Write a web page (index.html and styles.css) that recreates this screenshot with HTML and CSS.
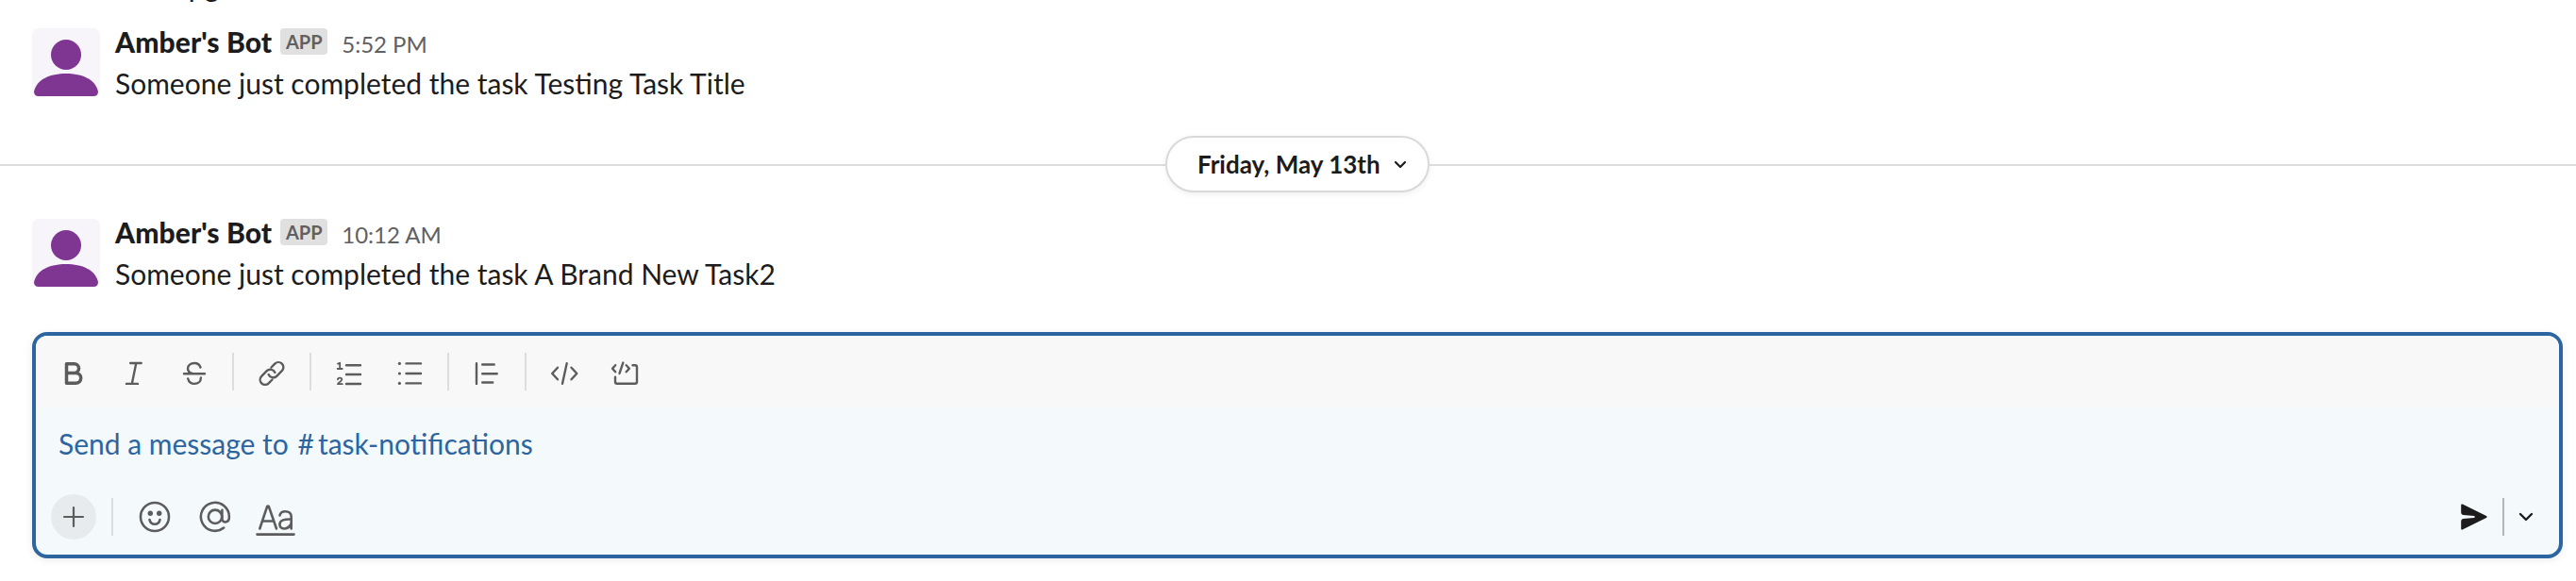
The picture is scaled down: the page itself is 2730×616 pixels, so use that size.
FILE: index.html
```html
<!DOCTYPE html>
<html lang="en">
<head>
<meta charset="utf-8">
<title>task-notifications</title>
<link rel="stylesheet" href="styles.css">
</head>
<body>
<main class="channel">
  <p class="previous">Task upgrade</p>

  <article class="message">
    <svg class="avatar" viewBox="0 0 72 72"><rect width="72" height="72" rx="7" fill="#f7f4fa"/><circle cx="36" cy="28" r="16" fill="#7f3692"/><path d="M2 67C5 54 19 48 36 48s31 6 34 19q0 5-5 5H7q-5 0-5-5z" fill="#7f3692"/></svg>
    <div class="body">
      <header class="meta"><span class="name">Amber's Bot</span><span class="badge">APP</span><time class="time">5:52 PM</time></header>
      <p class="text">Someone just completed the task Testing Task Title</p>
    </div>
  </article>

  <div class="divider">
    <button class="date">Friday, May 13th<svg width="14" height="9" viewBox="0 0 14 9"><path d="M2 2l5 5 5-5" fill="none" stroke="#1d1c1d" stroke-width="2.2" stroke-linecap="round" stroke-linejoin="round"/></svg></button>
  </div>

  <article class="message second">
    <svg class="avatar" viewBox="0 0 72 72"><rect width="72" height="72" rx="7" fill="#f7f4fa"/><circle cx="36" cy="28" r="16" fill="#7f3692"/><path d="M2 67C5 54 19 48 36 48s31 6 34 19q0 5-5 5H7q-5 0-5-5z" fill="#7f3692"/></svg>
    <div class="body">
      <header class="meta"><span class="name">Amber's Bot</span><span class="badge">APP</span><time class="time">10:12 AM</time></header>
      <p class="text">Someone just completed the task A Brand New Task2</p>
    </div>
  </article>

  <section class="composer">
    <div class="toolbar">
      <svg class="icon" viewBox="0 0 36 36"><path d="M10.500 7.700v20.600h9.800a5.400 5.400 0 0 0 0-10.900h-9.800m0-9.700h8.200a4.800 4.800 0 0 1 0 9.700" stroke-width="3.500"/></svg>
      <svg class="icon" viewBox="0 0 36 36"><path d="M14.200 7h11.500M10 28.900h12M20.300 7L15.800 28.900"/></svg>
      <svg class="icon" viewBox="0 0 36 36"><path d="M7 18.300h22M24.500 11.500C23.500 8.500 21 7 18 7c-4 0-7 2.500-7 5.700 0 2.800 2 4.800 6 5.600M11.200 23.500c.8 3.300 3.400 5.400 6.900 5.400 4 0 6.800-2.500 6.800-6.400"/></svg>
      <span class="rule"></span>
      <svg class="icon" viewBox="0 0 36 36"><path d="M17.500 11.500l3.800-3.800a5.300 5.300 0 0 1 7.500 7.500l-5.600 5.600a5.300 5.300 0 0 1-8.600-1.800M18.500 24.500l-3.800 3.800a5.300 5.300 0 0 1-7.500-7.500l5.600-5.600a5.300 5.300 0 0 1 8.600 1.800"/></svg>
      <span class="rule"></span>
      <svg class="icon" viewBox="0 0 36 36"><path d="M15 9.300H30M15 19H30M15 29H30"/><path d="M6 7.600l2.200-.8v6.200m-2.500 0h5M5.900 24.300c.2-2.300 4.400-2.300 4.400 0 0 1.500-2.700 2.700-4.400 4.900h4.900" stroke-width="1.800"/></svg>
      <svg class="icon" viewBox="0 0 36 36"><path d="M14.500 7.400H30M14.500 18H30M14.500 28.400H30"/><g class="solid"><circle cx="7.400" cy="7.400" r="1.600"/><circle cx="7.400" cy="18" r="1.600"/><circle cx="7.400" cy="28.400" r="1.600"/></g></svg>
      <span class="rule"></span>
      <svg class="icon" viewBox="0 0 36 36"><path d="M7 7.200v21.700M13.200 8.500h12.500M13.200 18.300h15.500M13.200 27.500h11"/></svg>
      <span class="rule"></span>
      <svg class="icon" viewBox="0 0 36 36"><path d="M11 11.700L5.200 18l5.800 6.300M25.500 11.700l5.800 6.300-5.800 6.300M20.700 7.200l-4.700 21.600"/></svg>
      <svg class="icon" viewBox="0 0 36 36"><path d="M8.200 9.200L5 12.700l3.200 3.600M19.700 9.200l3.200 3.500-3.200 3.600M16.300 6.600l-3.800 11.300M26.500 9.200h2.500a2 2 0 0 1 2 2v15.600a2 2 0 0 1-2 2H10a2 2 0 0 1-2-2v-5"/></svg>
    </div>
    <p class="placeholder">Send a message to <span class="hash">#</span>task-notifications</p>
    <div class="actions">
      <span class="plus"><svg width="24" height="24" viewBox="0 0 24 24"><path d="M12 2v20M2 12h20"/></svg></span>
      <span class="rule"></span>
      <svg class="icon" viewBox="0 0 36 36"><circle cx="18" cy="18" r="15"/><path d="M12.500 21c1.200 6.300 9.800 6.300 11 0"/><g class="solid"><circle cx="13.300" cy="14.300" r="2.700"/><circle cx="22.700" cy="14.300" r="2.700"/></g></svg>
      <svg class="icon" viewBox="0 0 36 36"><circle cx="18" cy="17.800" r="7.200"/><path d="M25.400 10.800v9.200c0 5 7.500 5 7.500-2a15 15 0 1 0-5.700 11.600"/></svg>
      <svg class="icon" viewBox="0 0 36 36"><path d="M1.300 30.500L9 7.300q1-1.500 2 0L19 30.500M4.300 22.500h12M22.500 16.500c.7-2.700 2.700-4.200 5.600-4.200 4 0 6.600 2 6.600 5.700V30.500M34.700 20.500c-6.500-.3-12.300.8-12.300 5.500 0 6.300 10 6 12.300-1.500M-1.500 36.600h39"/></svg>
      <span class="spacer"></span>
      <svg class="send" width="28" height="28" viewBox="0 0 28 28"><path d="M.2 1.500Q.2 0 1.700.5L27 13q1.400 1 0 2L1.700 27.500Q.2 28 .2 26.500v-8q0-2.300 2.300-2.600L14 15q1.800-1 0-2L2.500 12.100Q.2 11.800.2 9.500z" fill="#1d1c1d"/></svg>
      <span class="rule dark"></span>
      <svg class="more" width="16" height="10" viewBox="0 0 16 10"><path d="M2 2l6 6 6-6" fill="none" stroke="#1d1c1d" stroke-width="2.400" stroke-linecap="round" stroke-linejoin="round"/></svg>
    </div>
  </section>
</main>
</body>
</html>
```
FILE: styles.css
```css
* { box-sizing: border-box; }
body { margin: 0; background: #fff; color: #1d1c1d; font: 30px/44px Lato, "Liberation Sans", sans-serif; }
p { margin: 0; }
.channel { height: 616px; overflow: hidden; display: flex; flex-direction: column; }
.previous { height: 44px; margin: -37px 0 0 118px; flex: none; }
.message { height: 74px; display: flex; flex: none; gap: 16px; margin-top: 23px; padding-left: 34px; }
.message.second { margin-top: 28px; }
.avatar { width: 72px; height: 72px; flex: none; }
.meta { display: flex; align-items: baseline; height: 36px; margin-top: -8px; }
.name { font-weight: 900; letter-spacing: .08px; }
.badge { align-self: flex-start; width: 50px; height: 28px; margin: 8px 0 0 9px; border-radius: 4px; background: #e0e0e0; color: #616061; font-size: 20px; font-weight: 700; line-height: 28px; text-align: center; }
.time { margin-left: 15px; color: #616061; font-size: 24px; }
.text { margin-top: 8px; white-space: nowrap; }
.divider { display: flex; align-items: center; height: 60px; margin-top: 40px; flex: none; }
.divider::before, .divider::after { content: ""; flex: 1; height: 2px; margin-top: 2px; background: #ddd; }
.divider::before { flex: none; width: 1235px; }
.date { display: flex; align-items: center; gap: 14px; width: 280px; height: 60px; padding: 0 0 0 32px; border: 2px solid #d9d9d9; border-radius: 30px; background: #fff; box-shadow: 0 2px 6px #00000010; color: #1d1c1d; font: 700 26px/56px Lato, sans-serif; white-space: nowrap; }
.composer { display: flex; flex-direction: column; width: 2682px; height: 240px; margin: 46px 0 0 34px; flex: none; border: 4px solid #2c659f; border-radius: 16px; background: #f4f9fc; overflow: hidden; box-shadow: 0 2px 8px #00000014; }
.toolbar { display: flex; align-items: center; height: 77px; padding: 0 0 1px 22px; background: #f8f8f8; }
.icon { width: 36px; height: 36px; margin-right: 28px; flex: none; overflow: visible; fill: none; stroke: #5d5c5d; stroke-width: 2.400; stroke-linecap: round; stroke-linejoin: round; }
.toolbar .icon { margin-top: 4px; }
.solid { fill: #5d5c5d; stroke: none; }
.rule { width: 2px; height: 40px; margin: 0 22px 0 -6px; background: #ddd; flex: none; }
.placeholder { height: 78px; padding: 15px 0 0 24px; color: #2c659f; }
.hash { margin: 0 4px 0 2px; }
.actions { display: flex; align-items: center; height: 77px; padding: 0 27px 3px 16px; }
.actions .rule { margin-right: 26px; }
.actions .icon { stroke-width: 2.600; }
.plus { display: flex; align-items: center; justify-content: center; width: 48px; height: 48px; margin-right: 22px; border-radius: 50%; background: #e7ebed; }
.plus svg { fill: none; stroke: #5d5c5d; stroke-width: 2.200; stroke-linecap: round; }
.spacer { flex: 1; }
.actions .rule.dark { margin: 0 15px 0 16px; background: #b3b7ba; }
```
